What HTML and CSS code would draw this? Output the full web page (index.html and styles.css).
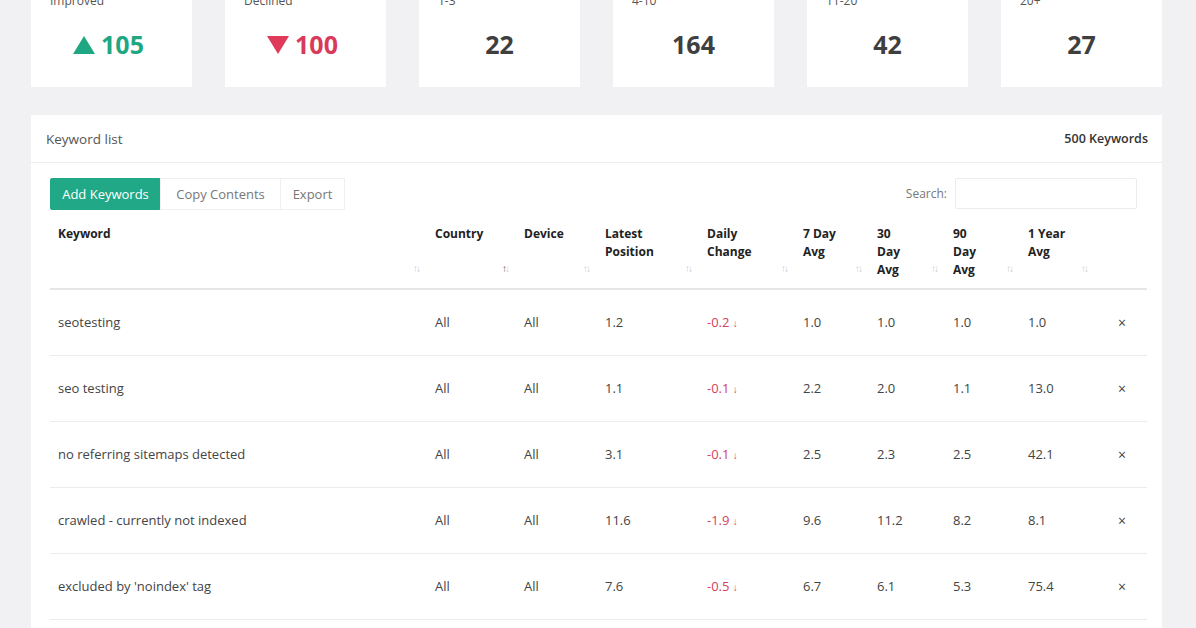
FILE: index.html
```html
<!DOCTYPE html>
<html>
<head>
<meta charset="utf-8">
<link rel="stylesheet" href="styles.css">
</head>
<body>
<div class="page">
  <div class="stats">
    <div class="card"><div class="card-label">Improved</div><div class="card-value up"><svg class="tri" viewBox="0 0 22 18" width="22" height="18"><polygon points="11,0 22,18 0,18" fill="#1fa783"/></svg>105</div></div>
    <div class="card"><div class="card-label">Declined</div><div class="card-value down"><svg class="tri" viewBox="0 0 22 18" width="22" height="18"><polygon points="0,0 22,0 11,18" fill="#e0395a"/></svg>100</div></div>
    <div class="card"><div class="card-label">1-3</div><div class="card-value">22</div></div>
    <div class="card"><div class="card-label">4-10</div><div class="card-value">164</div></div>
    <div class="card"><div class="card-label">11-20</div><div class="card-value">42</div></div>
    <div class="card"><div class="card-label">20+</div><div class="card-value">27</div></div>
  </div>

  <div class="panel">
    <div class="panel-head">
      <span class="panel-title">Keyword list</span>
      <span class="panel-count">500 Keywords</span>
    </div>
    <div class="panel-body">
      <div class="toolbar">
        <div class="btn-group">
          <button class="btn btn-primary">Add Keywords</button>
          <button class="btn">Copy Contents</button>
          <button class="btn">Export</button>
        </div>
        <label class="search">Search: <input type="text" class="search-input"></label>
      </div>
      <table class="kw-table">
        <colgroup>
          <col style="width:377px"><col style="width:89px"><col style="width:81px"><col style="width:102px"><col style="width:96px"><col style="width:74px"><col style="width:76px"><col style="width:75px"><col style="width:75px"><col style="width:52px">
        </colgroup>
        <thead>
          <tr>
            <th><div class="th-in"><span>Keyword</span><span class="sort">↑↓</span></div></th>
            <th><div class="th-in"><span>Country</span><span class="sort active"><b>↑</b>↓</span></div></th>
            <th><div class="th-in"><span>Device</span><span class="sort">↑↓</span></div></th>
            <th><div class="th-in"><span>Latest<br>Position</span><span class="sort">↑↓</span></div></th>
            <th><div class="th-in"><span>Daily<br>Change</span><span class="sort">↑↓</span></div></th>
            <th><div class="th-in"><span>7 Day<br>Avg</span><span class="sort">↑↓</span></div></th>
            <th><div class="th-in"><span>30<br>Day<br>Avg</span><span class="sort">↑↓</span></div></th>
            <th><div class="th-in"><span>90<br>Day<br>Avg</span><span class="sort">↑↓</span></div></th>
            <th><div class="th-in"><span>1 Year<br>Avg</span><span class="sort">↑↓</span></div></th>
            <th></th>
          </tr>
        </thead>
        <tbody>
          <tr><td>seotesting</td><td>All</td><td>All</td><td>1.2</td><td class="neg">-0.2 <span class="arr">↓</span></td><td>1.0</td><td>1.0</td><td>1.0</td><td>1.0</td><td class="x">×</td></tr>
          <tr><td>seo testing</td><td>All</td><td>All</td><td>1.1</td><td class="neg">-0.1 <span class="arr">↓</span></td><td>2.2</td><td>2.0</td><td>1.1</td><td>13.0</td><td class="x">×</td></tr>
          <tr><td>no referring sitemaps detected</td><td>All</td><td>All</td><td>3.1</td><td class="neg">-0.1 <span class="arr">↓</span></td><td>2.5</td><td>2.3</td><td>2.5</td><td>42.1</td><td class="x">×</td></tr>
          <tr><td>crawled - currently not indexed</td><td>All</td><td>All</td><td>11.6</td><td class="neg">-1.9 <span class="arr">↓</span></td><td>9.6</td><td>11.2</td><td>8.2</td><td>8.1</td><td class="x">×</td></tr>
          <tr><td>excluded by 'noindex' tag</td><td>All</td><td>All</td><td>7.6</td><td class="neg">-0.5 <span class="arr">↓</span></td><td>6.7</td><td>6.1</td><td>5.3</td><td>75.4</td><td class="x">×</td></tr>
        </tbody>
      </table>
    </div>
  </div>
</div>
</body>
</html>
```

FILE: styles.css
```css
* { box-sizing: border-box; }
html, body { margin: 0; padding: 0; }
body {
  background: #f1f1f3;
  font-family: "Open Sans", "Noto Sans", sans-serif;
  color: #444;
  overflow: hidden;
  height: 628px;
}
.page {
  padding: 0 34px 0 31px;
}
.stats {
  display: flex;
  gap: 33px;
  margin-top: -23px;
}
.card {
  width: 161px;
  height: 110px;
  background: #fff;
  padding: 15px 19px 0;
}
.card-label {
  font-size: 12px;
  line-height: 18px;
  color: #555;
}
.card-value {
  margin-top: 19px;
  font-size: 25px;
  line-height: 30px;
  font-weight: 700;
  color: #3f3f3f;
  text-align: center;
  display: flex;
  justify-content: center;
  align-items: center;
  gap: 6px;
}
.card-value.up { color: #1fa783; }
.card-value.down { color: #d9395a; }
.tri { display: block; margin-top: 1px; margin-left: -6px; }

.panel {
  margin-top: 28px;
  background: #fff;
  height: 560px;
}
.panel-head {
  display: flex;
  justify-content: space-between;
  align-items: center;
  height: 48px;
  padding: 0 14px 0 15px;
  border-bottom: 1px solid #ededee;
}
.panel-title { font-size: 13.5px; color: #555; }
.panel-count { font-size: 12.5px; font-weight: 600; color: #333; }
.panel-body { padding: 14px 15px 0 19px; }
.toolbar {
  display: flex;
  justify-content: space-between;
  align-items: center;
  height: 33px;
}
.btn-group { display: flex; }
.btn {
  font-family: inherit;
  font-size: 13px;
  height: 32px;
  padding: 0;
  border: 1px solid #efefef;
  background: #fff;
  color: #777;
  border-radius: 0;
  margin: 0;
  margin-left: -1px;
  white-space: nowrap;
}
.btn-primary {
  background: #21a886;
  border-color: #21a886;
  color: #fff;
  border-radius: 2px;
  width: 111px;
  margin-left: 0;
}
.btn:nth-child(2) { width: 121px; }
.btn:nth-child(3) { width: 65px; }
.search {
  display: flex;
  align-items: center;
  gap: 8px;
  font-size: 12px;
  color: #777;
  margin-right: 10px;
}
.search-input {
  width: 182px;
  height: 31px;
  border: 1px solid #ececec;
  border-radius: 2px;
  outline: none;
}
.kw-table {
  width: 1097px;
  table-layout: fixed;
  border-collapse: collapse;
  font-size: 13px;
}
.kw-table th {
  text-align: left;
  font-size: 12px;
  font-weight: 700;
  color: #222;
  line-height: 18px;
  padding: 15px 12px 10px 8px;
  border-bottom: 2px solid #e6e6e7;
  vertical-align: bottom;
}
.th-in {
  display: flex;
  justify-content: space-between;
  align-items: flex-end;
  height: 53px;
}
.th-in > span:first-child { align-self: flex-start; }
.sort {
  font-size: 10px;
  line-height: 12px;
  color: #c9c9c9;
  letter-spacing: -2px;
  font-weight: 400;
  margin-right: -4px;
  margin-bottom: 4px;
}
.sort b { color: #555; font-weight: 400; }
.kw-table td {
  height: 66px;
  padding: 0 8px;
  border-bottom: 1px solid #ececec;
  color: #444;
  white-space: nowrap;
}
.kw-table td.neg { color: #d6405e; }
.arr { font-size: 10px; }
.kw-table td.x { text-align: center; color: #444; font-size: 14px; padding-right: 6px; }
```
